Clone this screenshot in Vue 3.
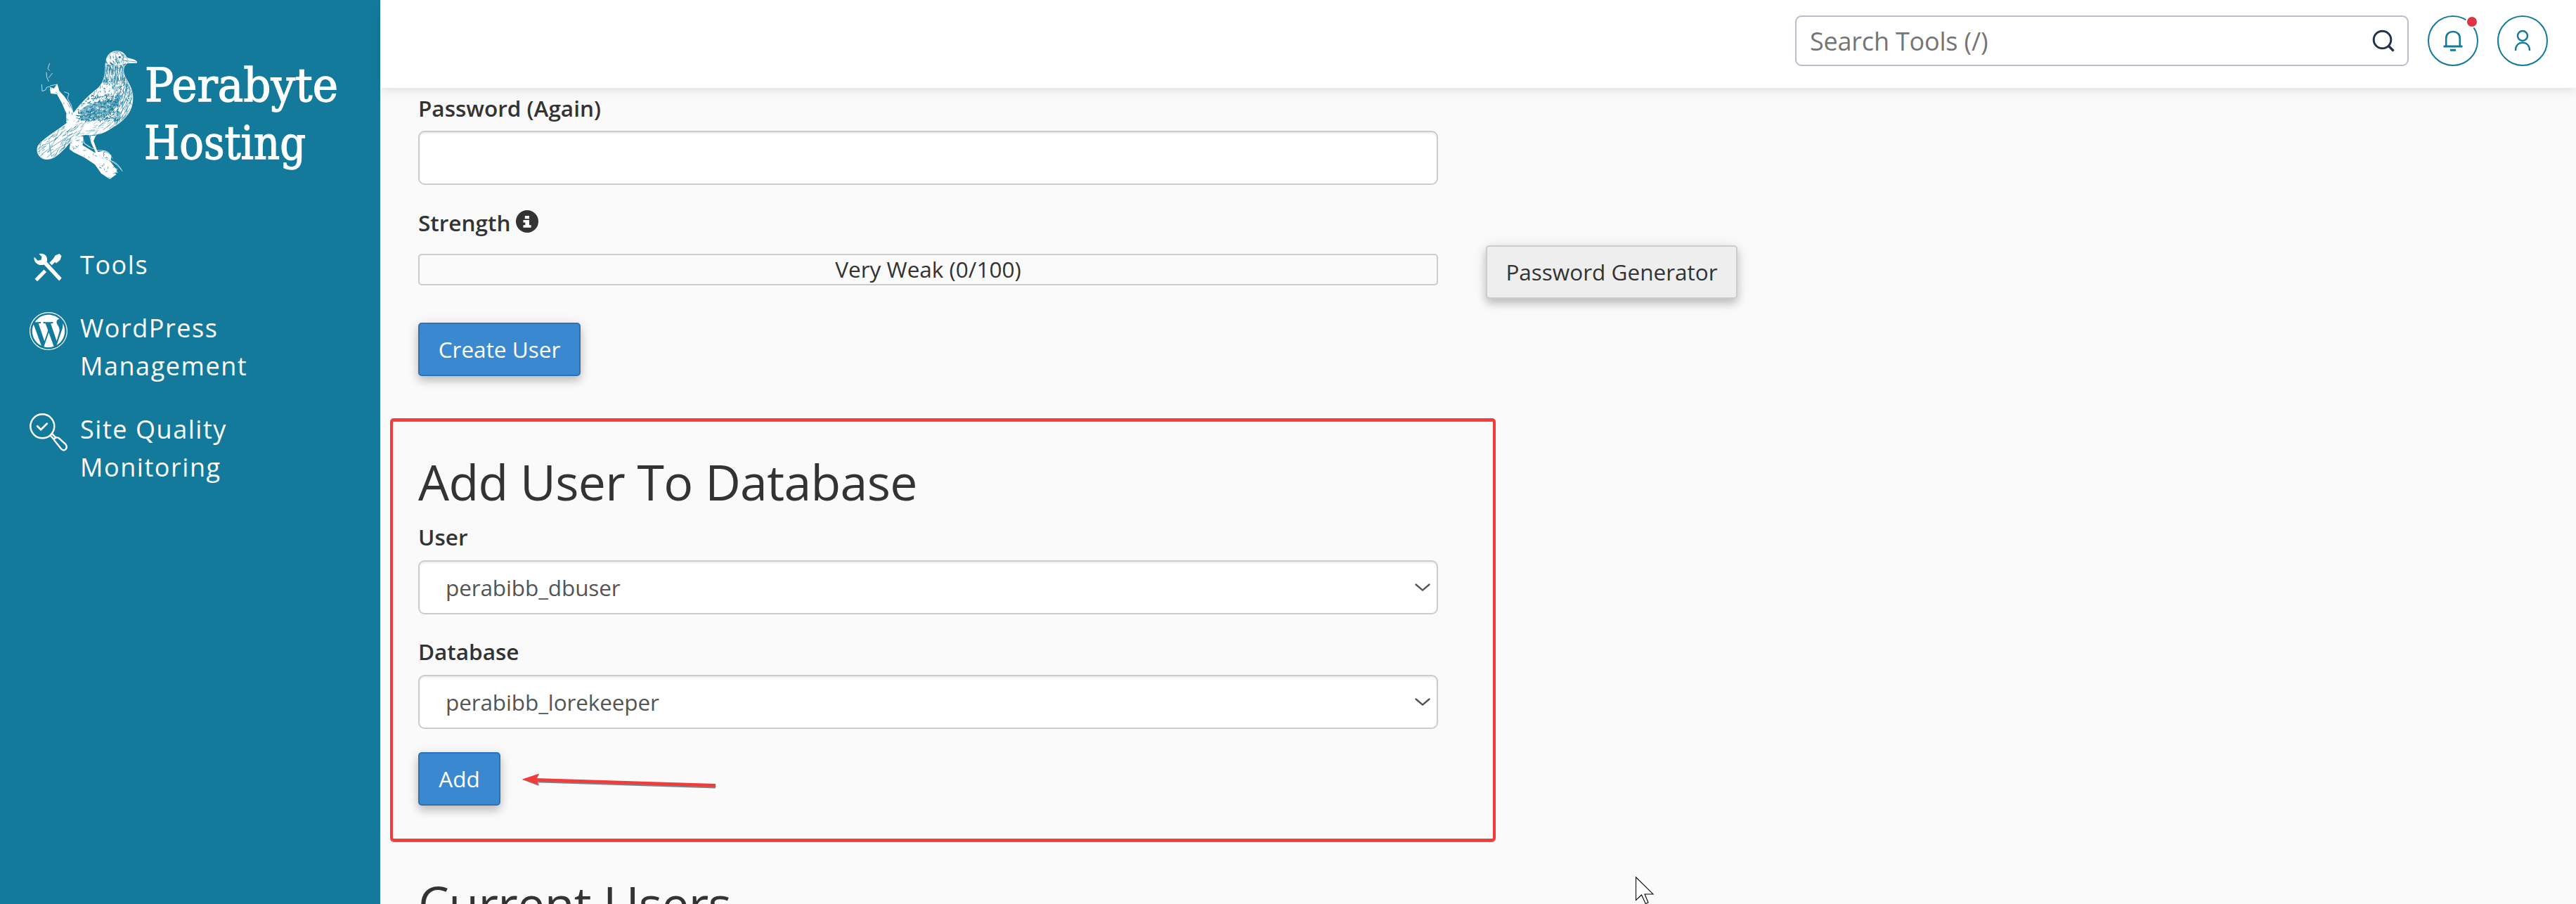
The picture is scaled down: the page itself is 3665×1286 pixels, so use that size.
<script setup>
import { ref } from 'vue'

const user = ref('perabibb_dbuser')
const database = ref('perabibb_lorekeeper')

// Small deterministic generator, so the engraved feathers are the same on each load
let seed = 17
const rnd = () => {
  seed = (seed * 16807) % 2147483647
  return seed / 2147483647
}

// Short engraved strokes scattered in an area; the angle is in degrees
function strokes(count, x, y, w, h, angle, spread, len) {
  let d = ''
  for (let i = 0; i < count; i++) {
    const a = ((angle + (rnd() - 0.5) * spread) * Math.PI) / 180
    const l = len * (0.5 + rnd())
    const px = x + rnd() * w
    const py = y + rnd() * h
    d += `M${px.toFixed(1)} ${py.toFixed(1)}l${(Math.cos(a) * l).toFixed(1)} ${(Math.sin(a) * l).toFixed(1)}`
  }
  return d
}

const feathers = {
  head: strokes(100, 325, 35, 95, 75, 60, 100, 13),
  neck: strokes(120, 318, 95, 100, 70, 88, 25, 18),
  breast: strokes(190, 280, 150, 160, 110, 70, 160, 9),
  flank: strokes(95, 370, 170, 90, 190, 108, 40, 26),
  wing: strokes(250, 215, 225, 175, 110, 150, 130, 9),
  wingLight: strokes(110, 215, 240, 190, 100, 150, 90, 8),
  tail: strokes(140, 40, 350, 190, 150, 135, 50, 20),
  belly: strokes(80, 200, 330, 230, 80, 150, 40, 16),
  branch: strokes(85, 180, 400, 210, 180, 40, 120, 9),
  twig: strokes(40, 95, 180, 100, 160, 62, 60, 12),
}
</script>

<template>
  <div class="page">
    <aside class="sidebar">
      <div class="brand">
        <svg class="bird" viewBox="0 0 480 600" aria-hidden="true">
          <defs>
            <clipPath id="body">
              <path d="M333 78C338 50 357 38 380 38C400 38 415 50 420 66L452 75Q466 80 464 88L424 89Q406 102 407 122C408 155 440 175 446 225C452 290 415 330 370 358C335 385 300 402 245 396C215 400 185 420 165 445C130 480 110 500 78 500C45 498 30 465 44 440C65 410 130 375 165 345C200 290 240 240 300 195C330 165 330 130 330 100Z" />
            </clipPath>
            <clipPath id="branch">
              <path d="M180 432Q205 396 235 402L233 440L285 472L325 463L355 482L352 510L380 548L372 568L348 584L312 560L285 522L240 492L195 470L176 456Z" />
            </clipPath>
            <clipPath id="twig">
              <path d="M92 190L110 198L124 178L132 207L155 232L176 262L194 304L186 340L162 342L163 305L145 262L123 222L96 219Z" />
            </clipPath>
          </defs>
          <g clip-path="url(#twig)">
            <rect x="80" y="170" width="120" height="180" fill="#fff" />
            <path :d="feathers.twig" class="ink" />
          </g>
          <g clip-path="url(#branch)">
            <rect x="170" y="390" width="220" height="200" fill="#fff" />
            <path :d="feathers.branch" class="ink" />
          </g>
          <g clip-path="url(#body)">
            <rect x="20" y="20" width="460" height="500" fill="#fff" />
            <path d="M222 290Q262 256 325 250Q370 248 395 232Q385 285 335 315Q275 345 225 330Z" fill="#147a9c" opacity=".6" />
            <path :d="feathers.head" class="ink" />
            <path :d="feathers.neck" class="ink" />
            <path :d="feathers.breast" class="ink" />
            <path :d="feathers.flank" class="ink" />
            <path :d="feathers.wing" class="ink wide" />
            <path :d="feathers.wingLight" class="chalk" />
            <path :d="feathers.tail" class="ink" />
            <path :d="feathers.belly" class="ink thin" />
            <path class="ink" d="M442 200Q450 290 345 370M432 190Q440 285 320 375M418 180Q430 270 300 360M60 440Q110 430 160 372M58 478Q110 440 190 390M80 494Q120 450 172 430M90 430L100 488" />
            <path class="ink" d="M412 78Q438 82 462 84" />
            <circle cx="391" cy="64" r="10" fill="#fff" />
            <circle cx="391" cy="64" r="5" fill="#147a9c" />
          </g>
          <g class="chalk">
            <path d="M333 78C338 50 357 38 380 38C400 38 415 50 420 66L452 75Q466 80 464 88L424 89Q406 102 407 122C408 155 440 175 446 225C452 290 415 330 370 358" />
            <path d="M44 440C30 465 45 498 78 500C110 500 130 480 165 445" />
            <path d="M330 90C330 130 328 165 300 195C240 240 200 290 165 345C130 375 65 410 44 440" />
            <path d="M92 90L84 112L92 122M78 128Q76 150 88 168M88 152L104 132M58 180L60 209L74 204L80 192L92 190M94 186L124 180L132 208M154 212L174 219L168 240L184 268L194 308" />
            <path d="M232 402L240 432L266 448M262 398L270 430L298 482L314 512M290 395L278 420L292 462L312 492M235 428Q260 450 280 456M290 462Q345 458 350 482L360 496M330 470Q350 478 352 505Q385 514 403 552M356 508Q380 520 398 545" />
          </g>
          <path d="M266 400L288 398L278 422L296 466L310 500L292 480L270 430Z" fill="#fff" />
          <path d="M360 536L382 542M356 550L384 556M350 562L376 566M342 574L354 582" class="chalk" />
        </svg>
        <svg class="wordmark" viewBox="0 0 290 190">
          <text x="4" y="73.500" textLength="275" lengthAdjust="spacingAndGlyphs">Perabyte</text>
          <text x="3" y="155.500" textLength="230" lengthAdjust="spacingAndGlyphs">Hosting</text>
        </svg>
      </div>
      <nav class="nav">
        <a class="item">
          <svg class="nav-icon" viewBox="0 0 54 54" fill="none">
            <path d="M13.500 7.200C21 5 27 11 24.600 18.400L45.700 41.600L42.200 45.500L20.600 22.400C13 25 5 19 6.700 11.400L11.800 16.700L16.500 15.800L17.500 11.300Z" fill="#fff" />
            <path d="M9.300 44.500L22.300 31.200" stroke="#fff" stroke-width="5" />
            <path d="M30 21.500L35.500 16" stroke="#fff" stroke-width="5" />
            <path d="M33 15.500L36.500 9.500L42.500 7L45.500 10L43.500 16L38 20.500Z" fill="#fff" />
          </svg>
          <span>Tools</span>
        </a>
        <a class="item">
          <svg class="nav-icon" viewBox="0 0 122.520 122.523" fill="#fff">
            <path d="m8.708 61.260c0 20.802 12.089 38.779 29.619 47.298l-25.069-68.686c-2.916 6.536-4.550 13.769-4.550 21.388z" />
            <path d="m96.740 58.608c0-6.495-2.333-10.993-4.334-14.494-2.664-4.329-5.161-7.995-5.161-12.324 0-4.831 3.664-9.328 8.825-9.328.233 0 .454.029.681.042-9.350-8.566-21.807-13.796-35.489-13.796-18.360 0-34.513 9.420-43.910 23.688 1.233.037 2.395.063 3.382.063 5.497 0 14.006-.667 14.006-.667 2.833-.167 3.167 3.994.337 4.329 0 0-2.847.335-6.015.501l19.138 56.925 11.501-34.493-8.188-22.434c-2.830-.166-5.511-.501-5.511-.501-2.832-.166-2.500-4.496.332-4.329 0 0 8.679.667 13.843.667 5.496 0 14.006-.667 14.006-.667 2.835-.167 3.168 3.994.337 4.329 0 0-2.853.335-6.015.501l18.992 56.494 5.242-17.517c2.272-7.269 4.001-12.490 4.001-16.989z" />
            <path d="m62.184 65.857-15.768 45.819c4.708 1.384 9.687 2.141 14.846 2.141 6.120 0 11.989-1.058 17.452-2.979-.141-.225-.269-.464-.374-.724z" />
            <path d="m107.376 36.046c.226 1.674.354 3.471.354 5.404 0 5.333-.996 11.328-3.996 18.824l-16.053 46.413c15.624-9.111 26.133-26.038 26.133-45.426.001-9.137-2.333-17.729-6.438-25.215z" />
            <path d="m61.262 0c-33.779 0-61.262 27.481-61.262 61.260 0 33.783 27.483 61.263 61.262 61.263 33.778 0 61.265-27.480 61.265-61.263-.001-33.779-27.487-61.260-61.265-61.260zm0 119.715c-32.230 0-58.453-26.223-58.453-58.455 0-32.230 26.222-58.451 58.453-58.451 32.229 0 58.450 26.221 58.450 58.451 0 32.232-26.221 58.455-58.450 58.455z" />
          </svg>
          <span>WordPress<br />Management</span>
        </a>
        <a class="item">
          <svg class="nav-icon" viewBox="0 0 54 54" fill="none" stroke="#fff" stroke-width="2.400">
            <circle cx="18.300" cy="18.300" r="17" />
            <path d="M11.200 18.200L16.200 23.200L24.800 14.600" stroke-width="2.700" stroke-linecap="round" stroke-linejoin="round" />
            <path d="M29.500 31.500L35.500 37.800M32.200 29.200L38 35.200M34.800 37.800L45 50.500Q49 54.500 52 50.500Q54 47 51 43.500L41.500 35Q38 33.500 35.800 35.500Q34.200 36.500 35.500 38.500Z" />
          </svg>
          <span>Site Quality<br />Monitoring</span>
        </a>
      </nav>
    </aside>

    <div class="main">
      <header class="topbar">
        <div class="search">
          <span>Search Tools (/)</span>
          <svg width="32" height="32" viewBox="0 0 32 32" fill="none" stroke="#22344a" stroke-width="3">
            <circle cx="14.500" cy="14.500" r="12.300" />
            <path d="M23 23L30.500 30.500" stroke-width="3.400" />
          </svg>
        </div>
        <button class="round" aria-label="Notifications">
          <svg width="28" height="30" viewBox="0 0 28 30" fill="none" stroke="#147a9c" stroke-width="2.600">
            <path d="M4.200 22.500V11.500C4.200 5.500 8.500 2 14 2S23.800 5.500 23.800 11.500V22.500" />
            <path d="M.5 23H27.500" stroke-width="3" />
            <path d="M10 28.300H18" stroke-width="3" />
          </svg>
          <i class="dot"></i>
        </button>
        <button class="round" aria-label="Account">
          <svg width="24" height="31" viewBox="0 0 24 31" fill="none" stroke="#147a9c" stroke-width="2.500">
            <circle cx="12" cy="9" r="7" />
            <path d="M2 30C2 23 6 18.800 12 18.800S22 23 22 30" />
          </svg>
        </button>
      </header>

      <div class="content">
        <label class="label">Password (Again)</label>
        <div class="field"></div>
        <label class="label strength">Strength
          <svg width="32" height="32" viewBox="0 0 32 32">
            <circle cx="16" cy="16" r="16" fill="#333" />
            <path d="M12.800 8h6.200v4.300h-6.200zM10.500 14h8.500v7.200h2.600v3.500H10.500v-3.500h2.800v-3.600h-2.800z" fill="#fff" />
          </svg>
        </label>
        <div class="meter-row">
          <div class="meter">Very Weak (0/100)</div>
          <button class="btn plain">Password Generator</button>
        </div>
        <button class="btn primary create">Create User</button>

        <h2 class="heading">Add User To Database</h2>
        <label class="label user">User</label>
        <div class="field">
          <span>{{ user }}</span>
          <svg class="chevron" width="22" height="12" viewBox="0 0 22 12"><path d="M1.500 1.500L11 9.700L20.500 1.500" /></svg>
        </div>
        <label class="label database">Database</label>
        <div class="field">
          <span>{{ database }}</span>
          <svg class="chevron" width="22" height="12" viewBox="0 0 22 12"><path d="M1.500 1.500L11 9.700L20.500 1.500" /></svg>
        </div>
        <button class="btn primary add">Add</button>
        <h2 class="heading current">Current Users</h2>
      </div>
    </div>

    <div class="callout"></div>
    <svg class="arrow" width="290" height="30" viewBox="0 0 290 30">
      <path d="M18 11.500L278 20" stroke="#76868c" stroke-width="5" />
      <path d="M3 10L27 2.500L22.500 10.500L27 19Z" fill="#76868c" />
      <path d="M18 10L278 18.200" stroke="#f43b3b" stroke-width="4.500" />
      <path d="M3 9.500L27 1.500L22.500 10L27 17.500Z" fill="#f43b3b" />
    </svg>
    <svg class="cursor" width="27" height="40" viewBox="0 0 27 40">
      <path d="M.5 .8V33.500L8.500 26L14.300 38.500L18 37L13 25H25Z" fill="#fff" stroke="#000" stroke-width="1.100" />
    </svg>
  </div>
</template>

<style>
body {
  margin: 0;
  overflow: hidden;
}
</style>

<style scoped>
.page {
  position: relative;
  display: flex;
  width: 3665px;
  height: 1286px;
  overflow: hidden;
  background: #fafafa;
  color: #333;
  font: 31.5px/45px "Open Sans", "Noto Sans", sans-serif;
}
.sidebar {
  box-sizing: border-box;
  flex: none;
  width: 541px;
  background: #147a9c;
  color: #fff;
}
.brand {
  display: flex;
  height: 350px;
  padding-left: 40px;
  box-sizing: border-box;
}
.bird {
  width: 160px;
  height: 200px;
  margin-top: 60px;
}
.wordmark {
  width: 290px;
  height: 190px;
  margin: 70px 0 0 2px;
}
.wordmark text {
  fill: #fff;
  stroke: #fff;
  stroke-width: 1.300px;
  font: 66px "DejaVu Serif Condensed", "DejaVu Serif", serif;
  font-stretch: condensed;
}
.ink {
  fill: none;
  stroke: #147a9c;
  stroke-width: 1.900;
}
.ink.wide {
  stroke-width: 3.300;
}
.ink.thin {
  stroke-width: 1.100;
}
.chalk {
  fill: none;
  stroke: #fff;
  stroke-width: 2.200;
}
.nav {
  display: flex;
  flex-direction: column;
  gap: 36px;
}
.item {
  display: flex;
  align-items: flex-start;
  gap: 18px;
  padding-left: 42px;
  font-size: 36px;
  line-height: 54px;
  letter-spacing: 1.550px;
}
.nav-icon {
  flex: none;
  width: 54px;
  height: 54px;
  margin: 4px 0 -4px;
}
.main {
  flex: 1;
  min-width: 0;
}
.topbar {
  position: relative;
  display: flex;
  justify-content: flex-end;
  align-items: flex-start;
  gap: 27px;
  box-sizing: border-box;
  height: 125px;
  padding: 22px 40px 0 0;
  background: #fff;
  box-shadow: 0 4px 14px rgba(0, 0, 0, 0.1);
}
.search {
  display: flex;
  align-items: center;
  justify-content: space-between;
  box-sizing: border-box;
  width: 873px;
  height: 72px;
  padding: 0 18px 0 19px;
  border: 2px solid #b9bccb;
  border-radius: 9px;
  color: #757575;
  font-size: 36px;
  letter-spacing: -0.200px;
}
.round {
  position: relative;
  display: flex;
  align-items: center;
  justify-content: center;
  box-sizing: border-box;
  width: 72px;
  height: 72px;
  padding: 0;
  border: 2px solid #147a9c;
  border-radius: 50%;
  background: #fff;
}
.round svg {
  margin-bottom: 1px;
}
.dot {
  position: absolute;
  top: -2px;
  right: -2px;
  width: 14px;
  height: 14px;
  border: 2px solid #fff;
  border-radius: 50%;
  background: #dc3545;
}
.content {
  display: flex;
  flex-direction: column;
  align-items: flex-start;
  padding: 6px 0 0 54px;
}
.label {
  height: 45px;
  font-weight: 600;
}
.field {
  display: flex;
  align-items: center;
  justify-content: space-between;
  box-sizing: border-box;
  width: 1451px;
  height: 77px;
  margin-top: 10px;
  padding: 0 9px 0 37px;
  border: 2px solid #ccc;
  border-radius: 9px;
  background: #fff;
  box-shadow: inset 0 2px 3px rgba(0, 0, 0, 0.075);
  color: #555;
  letter-spacing: -0.120px;
}
.field span {
  margin-bottom: 1px;
}
.chevron {
  fill: none;
  stroke: #555;
  stroke-width: 2.400;
  stroke-linecap: round;
  stroke-linejoin: round;
}
.strength {
  display: flex;
  gap: 8px;
  margin-top: 31px;
}
.strength svg {
  margin-top: 5px;
}
.meter-row {
  display: flex;
  align-items: flex-start;
  gap: 68px;
  margin-top: 10px;
}
.meter {
  box-sizing: border-box;
  width: 1451px;
  height: 45px;
  margin-top: 12px;
  border: 2px solid #ccc;
  border-radius: 5px;
  line-height: 39px;
  text-align: center;
}
.btn {
  box-sizing: border-box;
  height: 76px;
  padding: 0 0 2px;
  border: 2px solid #ccc;
  border-radius: 5px;
  font: inherit;
  box-shadow: 0 7px 13px rgba(0, 0, 0, 0.22), 0 0 20px rgba(0, 0, 0, 0.07);
}
.plain {
  width: 358px;
  background: #eee;
  color: #333;
}
.primary {
  border-color: #2a72b5;
  background: #3a89d0;
  color: #fff;
}
.create {
  width: 231px;
  margin-top: 34px;
}
.heading {
  height: 77px;
  margin: 110px 0 0;
  font-size: 69.750px;
  font-weight: 400;
  line-height: 79px;
  letter-spacing: -0.650px;
}
.user {
  margin-top: 19px;
}
.user + .field {
  margin-top: 11px;
}
.database {
  margin-top: 30px;
}
.database + .field {
  margin-top: 11px;
}
.add {
  width: 117px;
  margin-top: 33px;
}
.current {
  margin-top: 99px;
}
.callout {
  position: absolute;
  left: 555px;
  top: 595px;
  box-sizing: border-box;
  width: 1573px;
  height: 602px;
  border: 4px solid #f43b3b;
  border-radius: 5px;
  box-shadow: 0 1px 0 #75858b, inset 0 1px 0 #75858b;
}
.arrow {
  position: absolute;
  left: 740px;
  top: 1099px;
}
.cursor {
  position: absolute;
  left: 2327px;
  top: 1247px;
}
</style>
